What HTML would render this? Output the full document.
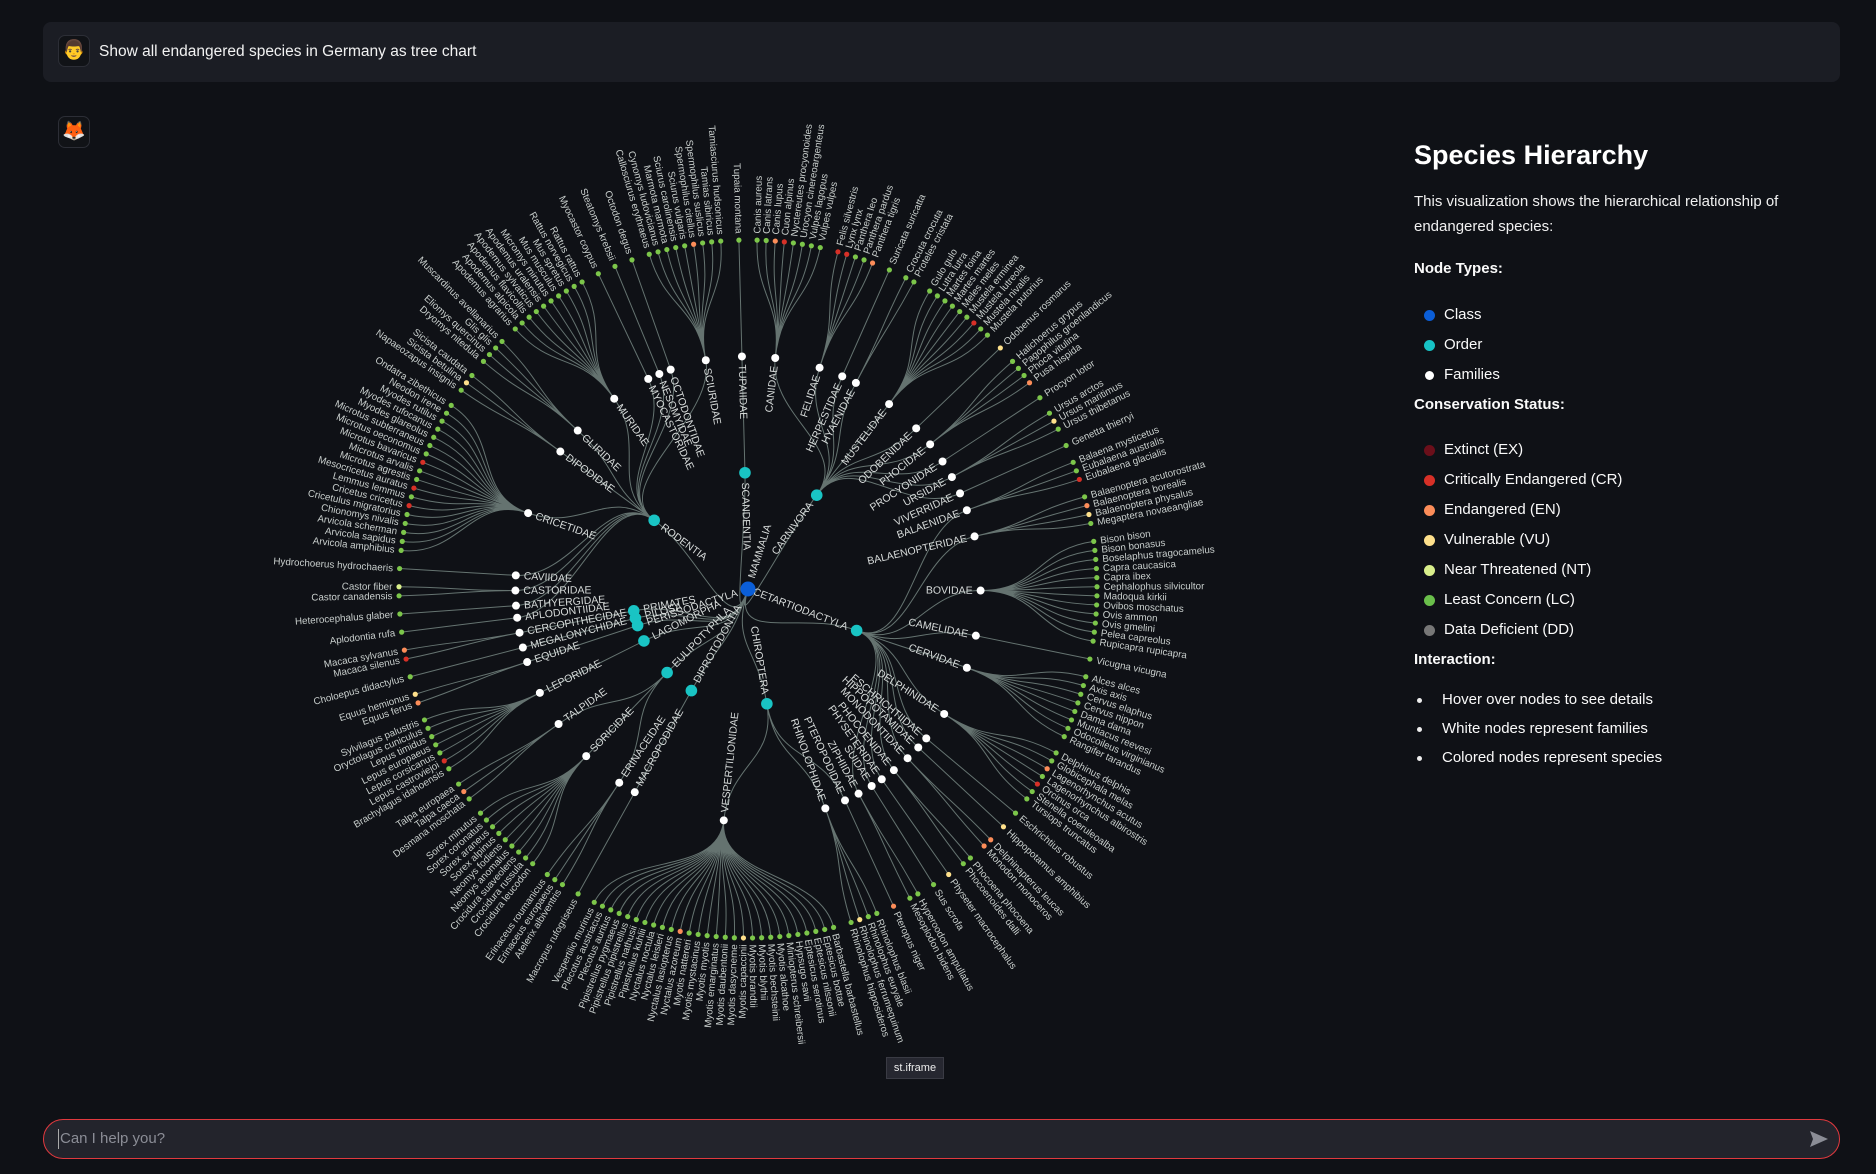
<!DOCTYPE html>
<html><head><meta charset="utf-8">
<style>
html,body{margin:0;padding:0;width:1876px;height:1174px;background:#0f1116;overflow:hidden;font-family:"Liberation Sans",sans-serif;color:#fafafa}
.hdr{position:absolute;left:43px;top:22px;width:1797px;height:60px;background:#1b1d24;border-radius:8px}
.av{position:absolute;width:30px;height:30px;border-radius:7px;border:1px solid #2c2e36;background:#111317;font-size:19px;line-height:30px;text-align:center}
.q{position:absolute;left:99px;top:43px;font-size:15.5px;color:#f2f2f2}
.side{position:absolute;left:1414px;top:140px;width:420px}
.side h1{margin:0;font-size:27px;font-weight:bold;color:#fff}
.side p{margin:18px 0 0;font-size:15px;line-height:25px;color:#f0f0f0}
.side .b{font-weight:bold;font-size:15px;margin-top:19px}
.li{position:relative;height:30px;line-height:30px;font-size:15px;padding-left:30px}
.li i{position:absolute;left:10px;top:10px;width:11px;height:11px;border-radius:50%}
.bl{position:relative;height:29px;line-height:29px;font-size:15px;padding-left:28px}
.bl:before{content:"";position:absolute;left:3px;top:13px;width:5px;height:5px;border-radius:50%;background:#eee}
.tag{position:absolute;left:886px;top:1057px;width:56px;height:20px;background:#262730;border:1px solid #3a3b44;font-size:11px;line-height:20px;text-align:center;color:#eee}
.inp{position:absolute;left:43px;top:1119px;width:1795px;height:38px;border:1.5px solid #e0393e;border-radius:20px;background:#23242c}
.inp span{position:absolute;left:16px;top:10px;font-size:15px;color:#8b8d96}
.inp b{position:absolute;left:14px;top:9px;width:1px;height:20px;background:#aaa}
</style></head><body>
<div class="hdr"></div>
<div class="av" style="left:58px;top:35px">👨</div>
<div class="q">Show all endangered species in Germany as tree chart</div>
<div class="av" style="left:58px;top:116px">🦊</div>

<svg id="tree" width="1876" height="1174" style="position:absolute;left:0;top:0"></svg>

<div class="side">
<h1>Species Hierarchy</h1>
<p>This visualization shows the hierarchical relationship of endangered species:</p>
<div class="b" style="margin-top:21px">Node Types:</div>
<div style="height:23px"></div>
<div class="li"><i style="background:#0b5ed7"></i>Class</div>
<div class="li"><i style="background:#17c3c6"></i>Order</div>
<div class="li"><i style="background:#fff;width:9px;height:9px;top:11px;left:11px"></i>Families</div>
<div class="b" style="margin-top:6px">Conservation Status:</div>
<div style="height:22px"></div>
<div class="li"><i style="background:#6b0f1a"></i>Extinct (EX)</div>
<div class="li"><i style="background:#d73027"></i>Critically Endangered (CR)</div>
<div class="li"><i style="background:#fc8d59"></i>Endangered (EN)</div>
<div class="li"><i style="background:#fee08b"></i>Vulnerable (VU)</div>
<div class="li"><i style="background:#d9ef8b"></i>Near Threatened (NT)</div>
<div class="li"><i style="background:#6abf4b"></i>Least Concern (LC)</div>
<div class="li"><i style="background:#777"></i>Data Deficient (DD)</div>
<div class="b" style="margin-top:6px">Interaction:</div>
<div style="height:17px"></div>
<div class="bl">Hover over nodes to see details</div>
<div class="bl">White nodes represent families</div>
<div class="bl">Colored nodes represent species</div>
</div>

<div class="tag">st.iframe</div>
<div class="inp"><b></b><span>Can I help you?</span>
<svg style="position:absolute;right:10px;top:10px" width="20" height="18" viewBox="0 0 20 18"><path d="M1 1 L19 9 L1 17 L4 9 Z" fill="#8b8d96"/></svg></div>

<script>
var D=[
["CARNIVORA",[
["CANIDAE",["Canis aureus","Canis latrans","Canis lupus","Cuon alpinus","Nyctereutes procyonoides","Urocyon cinereoargenteus","Vulpes lagopus","Vulpes vulpes"]],
["FELIDAE",["Felis silvestris","Lynx lynx","Panthera leo","Panthera pardus","Panthera tigris"]],
["HERPESTIDAE",["Suricata suricatta"]],
["HYAENIDAE",["Crocuta crocuta","Proteles cristata"]],
["MUSTELIDAE",["Gulo gulo","Lutra lutra","Martes foina","Martes martes","Meles meles","Mustela erminea","Mustela lutreola","Mustela nivalis","Mustela putorius"]],
["ODOBENIDAE",["Odobenus rosmarus"]],
["PHOCIDAE",["Halichoerus grypus","Pagophilus groenlandicus","Phoca vitulina","Pusa hispida"]],
["PROCYONIDAE",["Procyon lotor"]],
["URSIDAE",["Ursus arctos","Ursus maritimus","Ursus thibetanus"]],
["VIVERRIDAE",["Genetta thierryi"]]]],
["CETARTIODACTYLA",[
["BALAENIDAE",["Balaena mysticetus","Eubalaena australis","Eubalaena glacialis"]],
["BALAENOPTERIDAE",["Balaenoptera acutorostrata","Balaenoptera borealis","Balaenoptera physalus","Megaptera novaeangliae"]],
["BOVIDAE",["Bison bison","Bison bonasus","Boselaphus tragocamelus","Capra caucasica","Capra ibex","Cephalophus silvicultor","Madoqua kirkii","Ovibos moschatus","Ovis ammon","Ovis gmelini","Pelea capreolus","Rupicapra rupicapra"]],
["CAMELIDAE",["Vicugna vicugna"]],
["CERVIDAE",["Alces alces","Axis axis","Cervus elaphus","Cervus nippon","Dama dama","Muntiacus reevesi","Odocoileus virginianus","Rangifer tarandus"]],
["DELPHINIDAE",["Delphinus delphis","Globicephala melas","Lagenorhynchus acutus","Lagenorhynchus albirostris","Orcinus orca","Stenella coeruleoalba","Tursiops truncatus"]],
["ESCHRICHTIIDAE",["Eschrichtius robustus"]],
["HIPPOPOTAMIDAE",["Hippopotamus amphibius"]],
["MONODONTIDAE",["Delphinapterus leucas","Monodon monoceros"]],
["PHOCOENIDAE",["Phocoena phocoena","Phocoenoides dalli"]],
["PHYSETERIDAE",["Physeter macrocephalus"]],
["SUIDAE",["Sus scrofa"]],
["ZIPHIIDAE",["Hyperoodon ampullatus","Mesoplodon bidens"]]]],
["CHIROPTERA",[
["PTEROPODIDAE",["Pteropus niger"]],
["RHINOLOPHIDAE",["Rhinolophus blasii","Rhinolophus euryale","Rhinolophus ferrumequinum","Rhinolophus hipposideros"]],
["VESPERTILIONIDAE",["Barbastella barbastellus","Eptesicus bottae","Eptesicus nilssonii","Eptesicus serotinus","Hypsugo savii","Miniopterus schreibersii","Myotis alcathoe","Myotis bechsteinii","Myotis blythii","Myotis brandtii","Myotis capaccinii","Myotis dasycneme","Myotis daubentonii","Myotis emarginatus","Myotis myotis","Myotis mystacinus","Myotis nattereri","Nyctalus azoreum","Nyctalus lasiopterus","Nyctalus leisleri","Nyctalus noctula","Pipistrellus kuhlii","Pipistrellus nathusii","Pipistrellus pipistrellus","Pipistrellus pygmaeus","Plecotus auritus","Plecotus austriacus","Vespertilio murinus"]]]],
["DIPROTODONTIA",[["MACROPODIDAE",["Macropus rufogriseus"]]]],
["EULIPOTYPHLA",[
["ERINACEIDAE",["Atelerix albiventris","Erinaceus europaeus","Erinaceus roumanicus"]],
["SORICIDAE",["Crocidura leucodon","Crocidura russula","Crocidura suaveolens","Neomys anomalus","Neomys fodiens","Sorex alpinus","Sorex araneus","Sorex coronatus","Sorex minutus"]],
["TALPIDAE",["Desmana moschata","Talpa caeca","Talpa europaea"]]]],
["LAGOMORPHA",[["LEPORIDAE",["Brachylagus idahoensis","Lepus castroviejoi","Lepus corsicanus","Lepus europaeus","Lepus timidus","Oryctolagus cuniculus","Sylvilagus palustris"]]]],
["PERISSODACTYLA",[["EQUIDAE",["Equus ferus","Equus hemionus"]]]],
["PILOSA",[["MEGALONYCHIDAE",["Choloepus didactylus"]]]],
["PRIMATES",[["CERCOPITHECIDAE",["Macaca silenus","Macaca sylvanus"]]]],
["RODENTIA",[
["APLODONTIIDAE",["Aplodontia rufa"]],
["BATHYERGIDAE",["Heterocephalus glaber"]],
["CASTORIDAE",["Castor canadensis","Castor fiber"]],
["CAVIIDAE",["Hydrochoerus hydrochaeris"]],
["CRICETIDAE",["Arvicola amphibius","Arvicola sapidus","Arvicola scherman","Chionomys nivalis","Cricetulus migratorius","Cricetus cricetus","Lemmus lemmus","Mesocricetus auratus","Microtus agrestis","Microtus arvalis","Microtus bavaricus","Microtus oeconomus","Microtus subterraneus","Myodes glareolus","Myodes rufocanus","Myodes rutilus","Neodon irene","Ondatra zibethicus"]],
["DIPODIDAE",["Napaeozapus insignis","Sicista betulina","Sicista caudata"]],
["GLIRIDAE",["Dryomys nitedula","Eliomys quercinus","Glis glis","Muscardinus avellanarius"]],
["MURIDAE",["Apodemus agrarius","Apodemus alpicola","Apodemus flavicollis","Apodemus sylvaticus","Apodemus uralensis","Micromys minutus","Mus musculus","Mus spretus","Rattus norvegicus","Rattus rattus"]],
["MYOCASTORIDAE",["Myocastor coypus"]],
["NESOMYIDAE",["Steatomys krebsii"]],
["OCTODONTIDAE",["Octodon degus"]],
["SCIURIDAE",["Callosciurus erythraeus","Cynomys ludovicianus","Marmota marmota","Sciurus carolinensis","Sciurus vulgaris","Spermophilus citellus","Spermophilus suslicus","Tamias sibiricus","Tamiasciurus hudsonicus"]]]],
["SCANDENTIA",[["TUPAIIDAE",["Tupaia montana"]]]]
];
var ST={"Mustela lutreola":"#d73027","Felis silvestris":"#d73027","Lynx lynx":"#d73027","Panthera tigris":"#fc8d59","Eubalaena glacialis":"#d73027","Balaenoptera borealis":"#fc8d59","Balaenoptera physalus":"#fee08b","Lagenorhynchus acutus":"#fc8d59","Orcinus orca":"#d73027","Hippopotamus amphibius":"#fee08b","Physeter macrocephalus":"#fee08b","Monodon monoceros":"#fc8d59","Pteropus niger":"#fc8d59","Rhinolophus ferrumequinum":"#fee08b","Macaca sylvanus":"#fc8d59","Macaca silenus":"#d73027","Equus ferus":"#fc8d59","Equus hemionus":"#fee08b","Lepus castroviejoi":"#d73027","Talpa caeca":"#fc8d59","Cricetus cricetus":"#d73027","Mesocricetus auratus":"#d73027","Microtus bavaricus":"#d73027","Canis lupus":"#fc8d59","Cuon alpinus":"#d73027","Ursus maritimus":"#fee08b","Pusa hispida":"#fc8d59","Myotis capaccinii":"#fee08b","Nyctalus azoreum":"#fc8d59","Odobenus rosmarus":"#fee08b","Delphinapterus leucas":"#fc8d59","Sicista betulina":"#fee08b","Spermophilus citellus":"#fc8d59","Castor fiber":"#d9ef8b"};
var CX=748,CY=589,R=349,ns="http://www.w3.org/2000/svg",svg=document.getElementById("tree");
var leaves=[],pos=0;
D.forEach(function(o){o[1].forEach(function(f){f[1].forEach(function(s,i){if(leaves.length){pos+=(i==0?2:1);}leaves.push({n:s,f:f[0],p:pos});});});});
var total=pos+2,k=360/total;
var li=0,orders=[];
D.forEach(function(o){var fams=[];o[1].forEach(function(f){var ls=[];f[1].forEach(function(){var L=leaves[li++];L.a=(L.p+1)*k;ls.push(L);});fams.push({n:f[0],a:(ls[0].a+ls[ls.length-1].a)/2,ch:ls});});orders.push({n:o[0],a:(fams[0].a+fams[fams.length-1].a)/2,ch:fams});});
var root={a:(orders[0].a+orders[orders.length-1].a)/2};
function pt(a,r){var t=(a-90)*Math.PI/180;return [CX+r*Math.cos(t),CY+r*Math.sin(t)];}
function link(a0,r0,a1,r1){var m=(r0+r1)/2,p0=pt(a0,r0),p1=pt(a0,m),p2=pt(a1,m),p3=pt(a1,r1);return "M"+p0+"C"+p1+" "+p2+" "+p3;}
var g=document.createElementNS(ns,"g");svg.appendChild(g);
var paths="";
orders.forEach(function(o){paths+=link(root.a,0,o.a,116.3);o.ch.forEach(function(f){paths+=link(o.a,116.3,f.a,232.6);f.ch.forEach(function(l){paths+=link(f.a,232.6,l.a,R);});});});
var P=document.createElementNS(ns,"path");P.setAttribute("d",paths);P.setAttribute("fill","none");P.setAttribute("stroke","#9fb5ae");P.setAttribute("stroke-opacity","0.6");P.setAttribute("stroke-width","1");g.appendChild(P);
function node(a,r,rad,fill,label,leaf,fs){var p=pt(a,r);var c=document.createElementNS(ns,"circle");c.setAttribute("cx",p[0]);c.setAttribute("cy",p[1]);c.setAttribute("r",rad);c.setAttribute("fill",fill);g.appendChild(c);
if(label){var t=document.createElementNS(ns,"text");var sa=a-90;var flip=a>=180;var anchorStart=(a<180)===leaf;
t.setAttribute("transform","rotate("+sa+" "+CX+" "+CY+") translate("+(CX+r)+" "+CY+")"+(flip?" rotate(180)":""));
t.setAttribute("x",anchorStart?(rad+4):-(rad+4));
t.setAttribute("dy","0.32em");t.setAttribute("text-anchor",anchorStart?"start":"end");t.setAttribute("font-size",fs);t.setAttribute("fill",leaf?"#c9cfcd":"#d8dcdb");t.setAttribute("font-family","Liberation Sans, sans-serif");t.textContent=label;g.appendChild(t);}}
orders.forEach(function(o){o.ch.forEach(function(f){f.ch.forEach(function(l){node(l.a,R,2.6,ST[l.n]||"#7cc64a",l.n,true,"9.8px");});});});
orders.forEach(function(o){o.ch.forEach(function(f){node(f.a,232.6,4,"#ffffff",f.n,false,"10.5px");});});
orders.forEach(function(o){node(o.a,116.3,5.8,"#19c4c4",o.n,false,"10.5px");});
node(root.a,0,7.5,"#0b5ed7","MAMMALIA",false,"10.5px");
</script>
</body></html>
